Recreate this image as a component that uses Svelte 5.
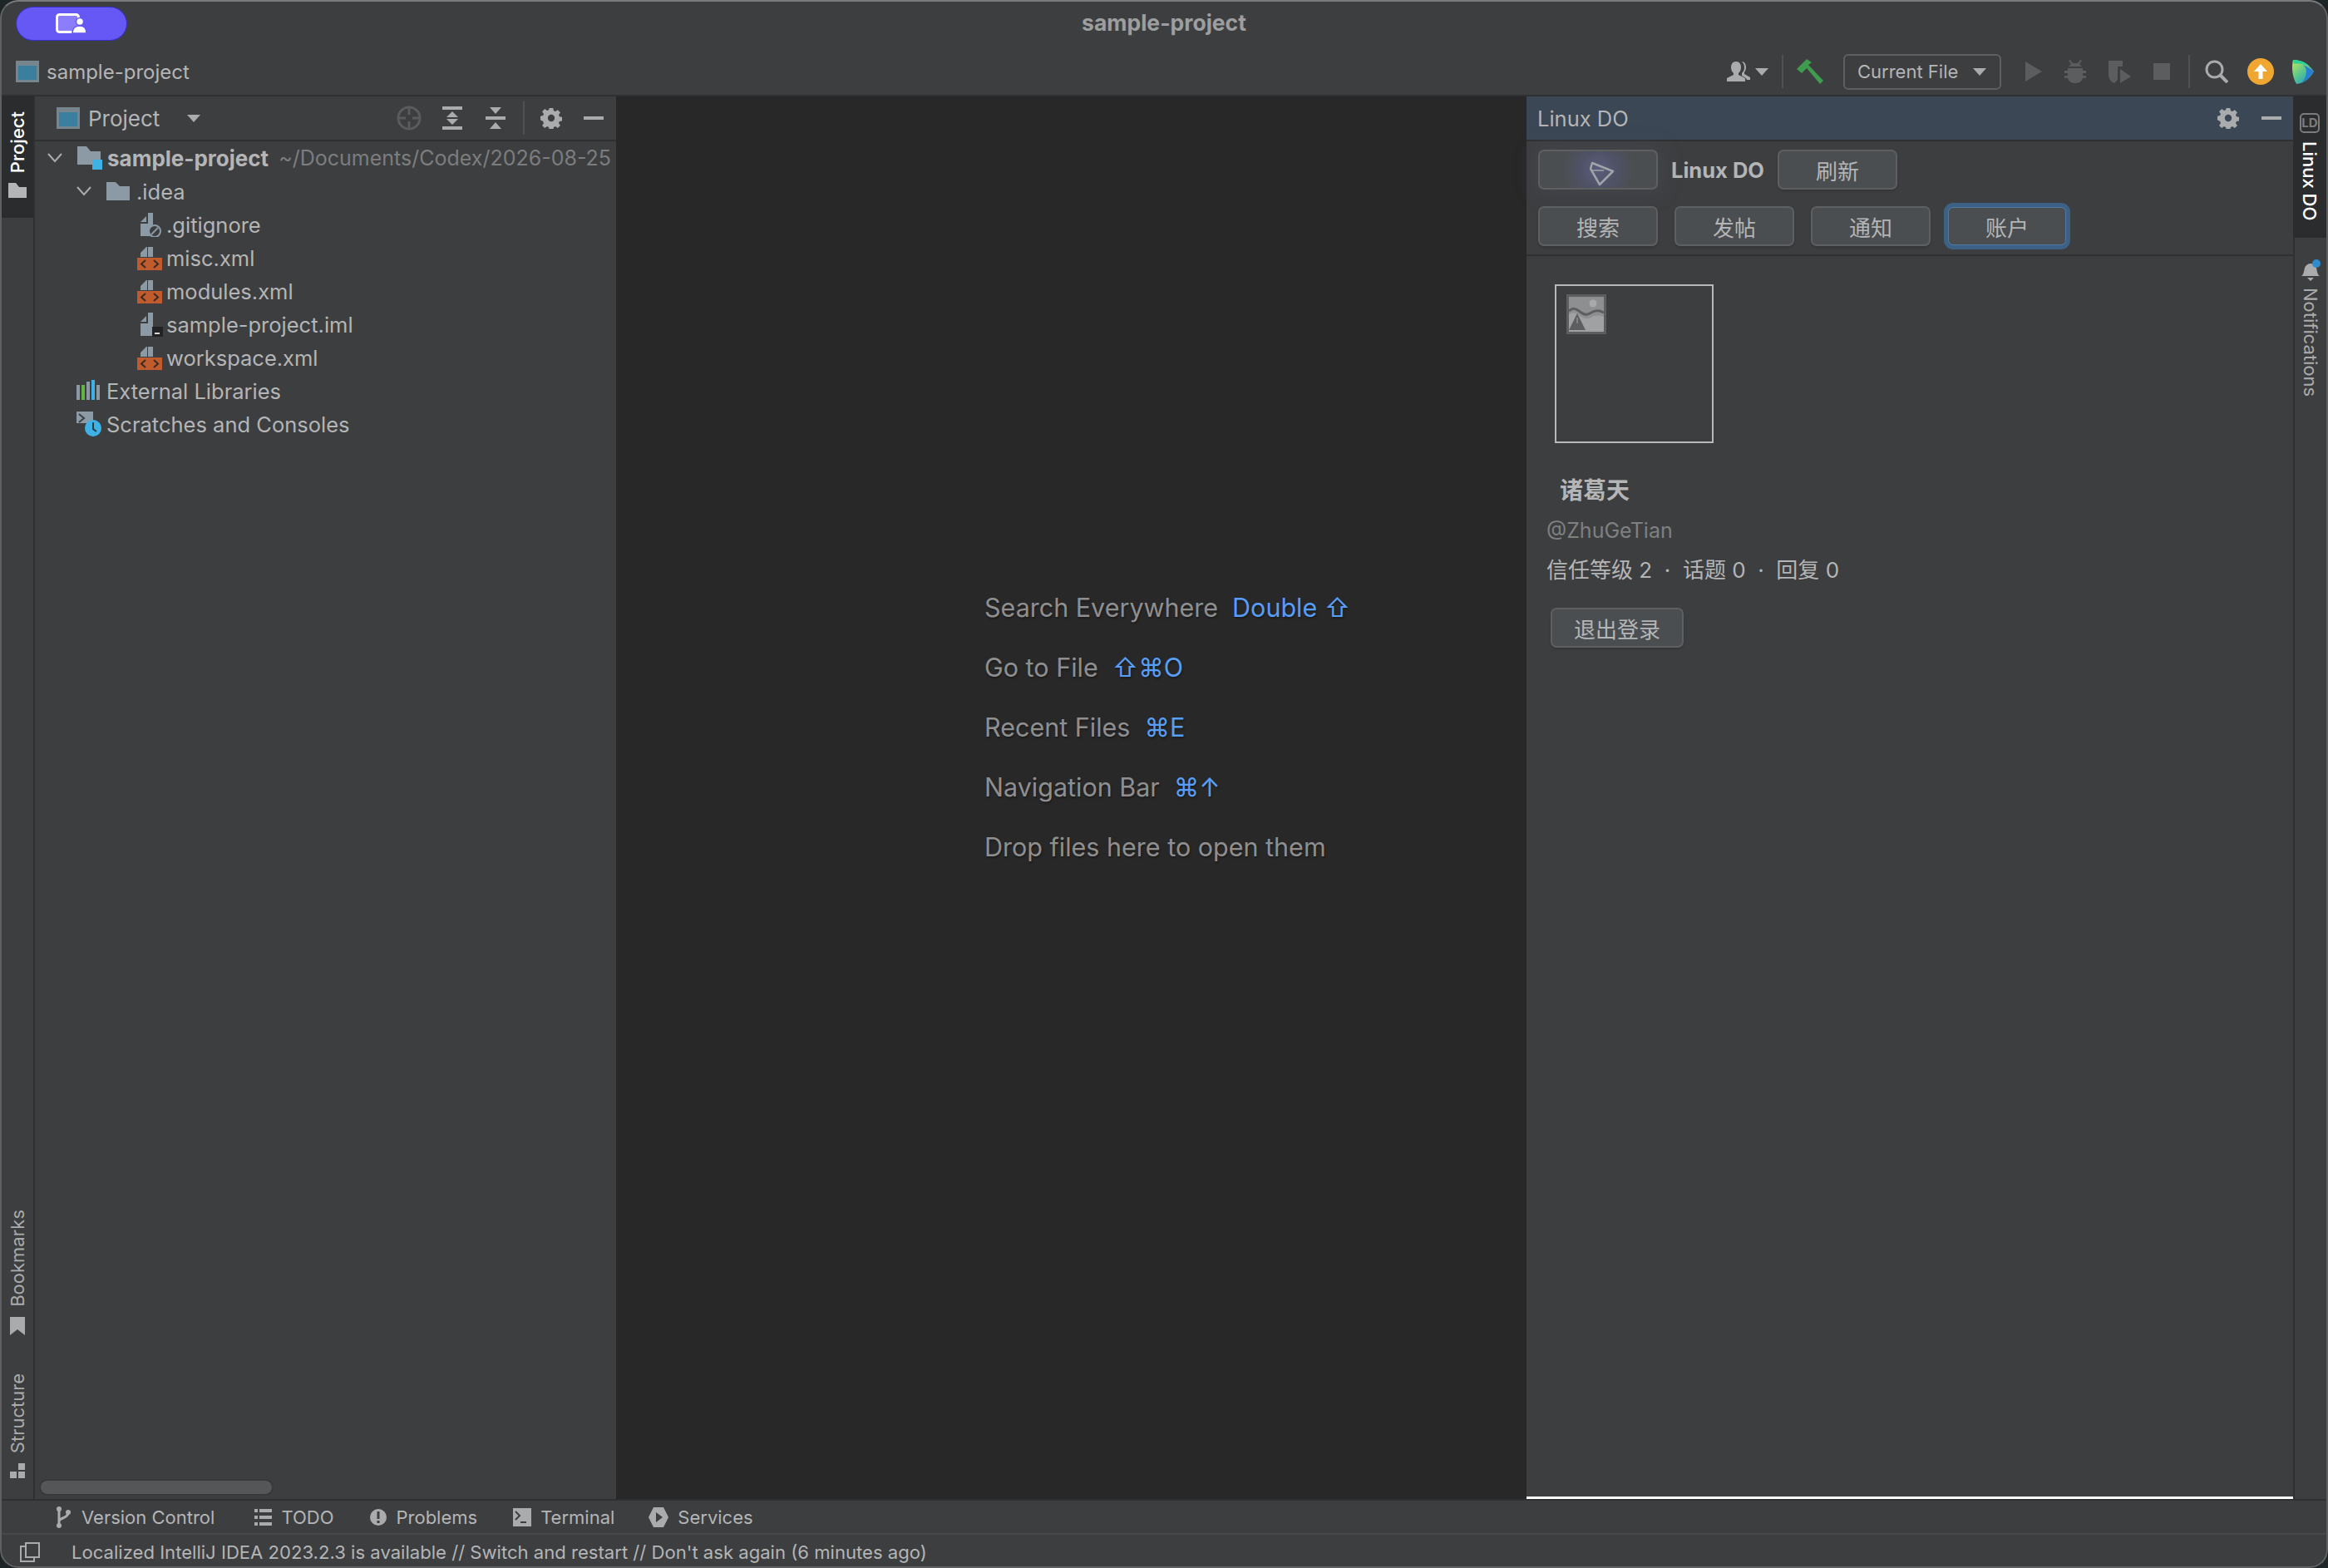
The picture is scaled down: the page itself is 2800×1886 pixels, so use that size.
<script>
	const tree = [
		{ name: ".gitignore", icon: "ignore" },
		{ name: "misc.xml", icon: "xml" },
		{ name: "modules.xml", icon: "xml" },
		{ name: "sample-project.iml", icon: "iml" },
		{ name: "workspace.xml", icon: "xml" }
	];

	const hints = [
		{ label: "Search Everywhere", key: "Double ⇧" },
		{ label: "Go to File", key: "⇧⌘O" },
		{ label: "Recent Files", key: "⌘E" },
		{ label: "Navigation Bar", key: "⌘↑" },
		{ label: "Drop files here to open them", key: "" }
	];

	const tabs = ["搜索", "发帖", "通知", "账户"];
</script>

{#snippet gear()}
	<svg class="gear" viewBox="-1 0 28 26" width="26" height="26">
		<path fill="#a9abac" fill-rule="evenodd" d="M10.5 0h5l.7 3.6 2.2.9 3-2.1 3.4 3.4-2.1 3 .9 2.2 3.4.7v5l-3.4.7-.9 2.2 2.1 3-3.4 3.4-3-2.1-2.2.9-.7 3.6h-5l-.7-3.6-2.2-.9-3 2.1-3.4-3.4 2.1-3-.9-2.2L-1 15.5v-5l3.4-.7.9-2.2-2.1-3 3.4-3.4 3 2.1 2.2-.9zM13 8.5a4.5 4.5 0 1 0 0 9 4.5 4.5 0 0 0 0-9z" />
	</svg>
{/snippet}

{#snippet projectIcon()}
	<svg viewBox="0 0 28 26" width="28" height="26">
		<rect width="28" height="26" fill="#77868e" />
		<rect x="3" y="6" width="22" height="17" fill="#3b7f9f" />
	</svg>
{/snippet}

{#snippet fileIcon(kind)}
	<svg viewBox="0 0 32 30" width="32" height="30">
		{#if kind === "xml"}
			<path fill="#8b9aa4" d="M5 14V9l7-7h1v12zM14 2h6v12h-6z" />
			<rect x="1" y="15" width="30" height="15" fill="#bf5b2c" />
			<path fill="none" stroke="#3a2b24" stroke-width="2" d="M11 18l-5 4.500 5 4.500M21 18l5 4.500-5 4.500" />
		{:else}
			<path fill="#8b9aa4" d="M5 12l7-7v7zM14 1h6v28H5V14h9z" />
			{#if kind === "ignore"}
				<circle cx="22" cy="23" r="7" fill="#3d3e40" stroke="#8b9aa4" stroke-width="2" />
				<path stroke="#8b9aa4" stroke-width="2" d="M18 27l8-8" />
			{:else}
				<rect x="19" y="18" width="13" height="12" fill="#232324" />
				<rect x="22" y="25" width="6" height="2" fill="#d8d8d8" />
			{/if}
		{/if}
	</svg>
{/snippet}

<div class="Window">
	<header class="Titlebar">
		<div class="Titlebar-side">
			<div class="Pill">
				<svg viewBox="0 0 38 24" width="38" height="24">
					<rect x="1.500" y="1.500" width="26" height="21" rx="3" fill="#8b7dfb" stroke="#fff" stroke-width="3" />
					<circle cx="29" cy="10" r="4.500" fill="#fff" stroke="#6558f5" stroke-width="1.500" />
					<path fill="#fff" stroke="#6558f5" stroke-width="1.500" d="M20 24c0-6 4-9 9-9s8 3 8 9z" />
				</svg>
			</div>
		</div>
		<div class="Titlebar-title">sample-project</div>
		<div class="Titlebar-side"></div>
	</header>

	<nav class="Navbar">
		<div class="Navbar-crumb">
			{@render projectIcon()}
			<span>sample-project</span>
		</div>
		<div class="Navbar-tools">
			<svg class="ml-person" viewBox="0 0 28 24" width="28" height="24">
				<path fill="#a9abac" d="M0 24v-4l8-4v-2c-2-2-3-4-3-7 0-4 2-7 6-7s6 3 6 7c0 3-1 5-3 7v2l8 4v4z" />
				<path fill="#a9abac" d="M18 0c3 0 5 3 5 7 0 3-1 4-2 6v2l7 4v3h-4c-1-3-5-4-6-5v-3c2-2 3-4 3-7 0-3-1-5-3-7z" />
			</svg>
			<i class="Arrow ml-arrow-small"></i>
			<b class="Sep ml-sep-a"></b>
			<svg class="ml-hammer" viewBox="0 0 32 30" width="32" height="30">
				<path fill="#3f9c4f" d="M0 12L12 0l6 4-4 3 18 19-4 4L12 11l-6 6z" />
			</svg>
			<div class="Runconfig">
				<span>Current File</span>
				<i class="Arrow"></i>
			</div>
			<svg class="ml-play" viewBox="0 0 20 24" width="20" height="24"><path fill="#5c5d5e" d="M0 0l20 12L0 24z" /></svg>
			<svg class="ml-bug" viewBox="0 0 26 28" width="26" height="28">
				<path fill="#5c5d5e" d="M7 0l3 4h6l3-4 2 1-3 4 3 3H5l3-3-3-4zM4 10h18v3h4v3h-4v3h4v3h-4c-1 4-5 6-9 6s-8-2-9-6H0v-3h4v-3H0v-3h4z" />
			</svg>
			<svg class="ml-coverage" viewBox="0 0 30 28" width="30" height="28">
				<path fill="#5c5d5e" d="M3 1h17v7h-6v16l-4 4c-5-2-7-6-7-11zM17 11l13 9-13 8z" />
			</svg>
			<svg class="ml-stop" viewBox="0 0 20 20" width="20" height="20"><rect width="20" height="20" fill="#5c5d5e" /></svg>
			<b class="Sep ml-sep-b"></b>
			<svg class="ml-search" viewBox="0 0 28 28" width="28" height="28">
				<circle cx="11.500" cy="11.500" r="9.500" fill="none" stroke="#a9abac" stroke-width="3" />
				<path stroke="#a9abac" stroke-width="4" d="M18 18l9 9" />
			</svg>
			<svg class="ml-update" viewBox="0 0 32 32" width="32" height="32">
				<circle cx="16" cy="16" r="16" fill="#f0a732" />
				<path fill="#fff" d="M16 7l8 9h-5.500v9h-5v-9H8z" />
			</svg>
			<svg class="ml-toolbox" viewBox="0 0 28 30" width="28" height="30">
				<defs>
					<linearGradient id="tb" x1="0" y1="0" x2="0.800" y2="1">
						<stop offset="0" stop-color="#c8e85a" />
						<stop offset="0.500" stop-color="#5fc88a" />
						<stop offset="1" stop-color="#1d97cf" />
					</linearGradient>
				</defs>
				<path fill="url(#tb)" d="M2 1c10 0 19 5 25 14-5 9-12 14-21 15C1 22 0 10 2 1z" />
				<path fill="#2a7ed0" d="M14 7c5 2 9 5 13 8-4 6-9 11-15 14 4-5 6-9 6-14 0-3-1-5-4-8z" />
				<path fill="#2bd29a" d="M2 1c7 0 14 2 19 7-6-2-12-3-18-2z" />
			</svg>
		</div>
	</nav>

	<main class="Main">
		<aside class="Stripe Stripe--left">
			<div class="Stripe-group">
				<div class="Stripe-tab Stripe-tab--active">
					<span class="Vertical Vertical--up Vertical--on">Project</span>
					<svg viewBox="0 0 22 18" width="22" height="18"><path fill="#b4b5b6" d="M0 0h9l4 5h9v13H0z" /></svg>
				</div>
			</div>
			<div class="Stripe-group">
				<div class="Stripe-tab">
					<span class="Vertical Vertical--up">Bookmarks</span>
					<svg viewBox="0 0 18 22" width="18" height="22"><path fill="#a9abac" d="M0 0h18v22l-9-7-9 7z" /></svg>
				</div>
				<div class="Stripe-tab Stripe-tab--structure">
					<span class="Vertical Vertical--up">Structure</span>
					<svg viewBox="0 0 18 18" width="18" height="18">
						<path fill="#a9abac" d="M10 0h8v8h-8zM0 10h8v8H0zM10 10h8v8h-8z" />
					</svg>
				</div>
			</div>
		</aside>

		<section class="Project">
			<div class="Project-head">
				{@render projectIcon()}
				<span class="Project-title">Project</span>
				<i class="Arrow Project-arrow"></i>
				<div class="Project-tools">
					<svg class="Project-locate" viewBox="0 0 30 30" width="30" height="30">
						<circle cx="15" cy="15" r="13" fill="none" stroke="#5a5b5c" stroke-width="3" />
						<path stroke="#5a5b5c" stroke-width="3" d="M15 2v9M15 19v9M2 15h9M19 15h9" />
					</svg>
					<svg viewBox="0 0 24 28" width="24" height="28">
						<path fill="#a9abac" d="M0 0h24v4H0zM0 24h24v4H0zM12 6l7 7H5zM5 15h14l-7 7z" />
					</svg>
					<svg viewBox="0 0 24 28" width="24" height="28">
						<path fill="#a9abac" d="M0 12h24v4H0zM5 1h14l-7 8zM12 19l7 8H5z" />
					</svg>
					<b class="Sep"></b>
					{@render gear()}
					<i class="Minus"></i>
				</div>
			</div>

			<div class="Tree">
				<div class="Tree-row Tree-row--root">
					<svg class="Tree-chevron" viewBox="0 0 18 12" width="18" height="12"><path fill="none" stroke="#a9abac" stroke-width="2" d="M1 1l8 9 8-9" /></svg>
					<svg class="Tree-icon" viewBox="0 0 30 28" width="30" height="28">
						<path fill="#8b9aa4" d="M0 0h11l5 6h12v16H0z" />
						<rect x="18" y="16" width="12" height="12" fill="#3eb2e4" />
					</svg>
					<span class="Tree-bold">sample-project</span>
					<span class="Tree-path">~/Documents/Codex/2026-08-25</span>
				</div>
				<div class="Tree-row Tree-row--dir">
					<svg class="Tree-chevron" viewBox="0 0 18 12" width="18" height="12"><path fill="none" stroke="#a9abac" stroke-width="2" d="M1 1l8 9 8-9" /></svg>
					<svg class="Tree-icon" viewBox="0 0 28 22" width="28" height="22"><path fill="#8b9aa4" d="M0 0h11l5 5h12v17H0z" /></svg>
					<span>.idea</span>
				</div>
				{#each tree as file}
					<div class="Tree-row Tree-row--file">
						{@render fileIcon(file.icon)}
						<span>{file.name}</span>
					</div>
				{/each}
				<div class="Tree-row Tree-row--top">
					<svg class="Tree-icon" viewBox="0 0 30 26" width="30" height="26">
						<path fill="#8b9aa4" d="M0 6h4v18H0zM12 2h4v22h-4zM24 6h4v18h-4z" />
						<path fill="#62b543" d="M6 6h4v18H6z" />
						<path fill="#3eb2e4" d="M18 0h4v24h-4z" />
					</svg>
					<span>External Libraries</span>
				</div>
				<div class="Tree-row Tree-row--top">
					<svg class="Tree-icon" viewBox="0 0 30 30" width="30" height="30">
						<path fill="#8b9aa4" d="M0 0h20v14H0z" />
						<path fill="none" stroke="#3d3e40" stroke-width="2" d="M3 3l6 5-6 5" />
						<circle cx="20" cy="20" r="10" fill="#3eb2e4" />
						<path fill="none" stroke="#2a3a44" stroke-width="2" d="M20 13v8l4 3" />
					</svg>
					<span>Scratches and Consoles</span>
				</div>
			</div>

			<div class="Scroll"><div class="Scroll-thumb"></div></div>
		</section>

		<section class="Editor">
			<div class="Hints">
				{#each hints as hint}
					<div class="Hint">
						<span>{hint.label}</span>
						{#if hint.key}<span class="Hint-key">{hint.key}</span>{/if}
					</div>
				{/each}
			</div>
		</section>

		<section class="Panel">
			<div class="Panel-head">
				<span>Linux DO</span>
				<div class="Panel-tools">
					{@render gear()}
					<i class="Minus"></i>
				</div>
			</div>
			<div class="Panel-actions">
				<div class="Panel-row">
					<button class="Btn Btn--glow">
						<svg class="Btn-plane" viewBox="0 0 30 30" width="30" height="30">
							<path fill="none" stroke="#a2a3a8" stroke-width="2.500" stroke-linejoin="round" d="M3 2l25 10-16 16L1 9z" />
							<path stroke="#a2a3a8" stroke-width="1.500" d="M2 11h15" />
						</svg>
					</button>
					<strong class="Panel-brand">Linux DO</strong>
					<button class="Btn">刷新</button>
				</div>
				<div class="Panel-row">
					{#each tabs as tab, i}
						<button class="Btn" class:Btn--focus={i === 3}>{tab}</button>
					{/each}
				</div>
			</div>
			<div class="Account">
				<div class="Avatar">
					<svg viewBox="0 0 48 48" width="48" height="48">
						<rect width="48" height="48" fill="#5d5e5f" />
						<rect x="3" y="3" width="42" height="42" fill="#8e8f90" />
						<circle cx="32" cy="11" r="4.500" fill="#a8a9aa" />
						<path fill="none" stroke="#5d5e5f" stroke-width="3" d="M3 20c5-4 8-3 12 0s8 6 13 3 10-5 17-1" />
						<path fill="#a0a1a2" d="M3 24c6-3 8-2 12 1s9 6 14 3 10-3 16-1v18H3z" />
						<path fill="#5d5e5f" d="M13 23l10 20H3z" />
						<path fill="none" stroke="#8e8f90" stroke-width="1.500" d="M13 28v7" />
					</svg>
				</div>
				<div class="Account-name">诸葛天</div>
				<div class="Account-handle">@ZhuGeTian</div>
				<div class="Account-stats">信任等级 2 &nbsp;·&nbsp; 话题 0 &nbsp;·&nbsp; 回复 0</div>
				<button class="Btn Btn--logout">退出登录</button>
			</div>
			<div class="Panel-rule"></div>
		</section>

		<aside class="Stripe Stripe--right">
			<div class="Stripe-tab Stripe-tab--active Stripe-tab--ld">
				<svg viewBox="0 0 24 24" width="24" height="24">
					<rect x="1" y="1" width="22" height="22" rx="4" fill="none" stroke="#7b7c7d" stroke-width="2" />
					<text x="12" y="17" text-anchor="middle" class="Ld-mark">LD</text>
				</svg>
				<span class="Vertical Vertical--on">Linux DO</span>
			</div>
			<div class="Stripe-tab Stripe-tab--bell">
				<svg viewBox="0 0 24 26" width="24" height="26">
					<path fill="#a9abac" d="M1 20c3-2 3-6 4-10 1-3 4-5 7-5s6 2 7 5c1 4 1 8 4 10z" />
					<path fill="#a9abac" d="M8 22h8l-4 4z" />
					<circle cx="19" cy="5" r="5" fill="#2e8bcd" />
				</svg>
				<span class="Vertical">Notifications</span>
			</div>
		</aside>
	</main>

	<div class="Toolbar">
		<div class="Toolbar-item">
			<svg viewBox="0 0 18 26" width="18" height="26">
				<circle cx="4" cy="3" r="3" fill="#a9abac" />
				<circle cx="15" cy="7" r="3" fill="#a9abac" />
				<circle cx="4" cy="23" r="3" fill="#a9abac" />
				<path fill="none" stroke="#a9abac" stroke-width="3" d="M4 3v20M4 18c0-5 11-3 11-11" />
			</svg>
			Version Control
		</div>
		<div class="Toolbar-item">
			<svg viewBox="0 0 21 20" width="21" height="20">
				<path fill="#a9abac" d="M0 0h4v4H0zM6 0h15v4H6zM0 8h4v4H0zM6 8h15v4H6zM0 16h4v4H0zM6 16h15v4H6z" />
			</svg>
			TODO
		</div>
		<div class="Toolbar-item">
			<svg viewBox="0 0 20 22" width="20" height="22">
				<circle cx="10" cy="11" r="10" fill="#a9abac" />
				<path fill="#3d3e40" d="M8.500 4h3v9h-3zM8.500 15h3v3h-3z" />
			</svg>
			Problems
		</div>
		<div class="Toolbar-item">
			<svg viewBox="0 0 22 22" width="22" height="22">
				<rect width="22" height="22" fill="#a9abac" />
				<path fill="none" stroke="#3d3e40" stroke-width="2" d="M3 4l5 5-5 5M9 17h7" />
			</svg>
			Terminal
		</div>
		<div class="Toolbar-item">
			<svg viewBox="0 0 24 24" width="24" height="24">
				<path fill="#a9abac" d="M6 0h12l6 12-6 12H6L0 12z" />
				<path fill="#3d3e40" d="M9 6l8 6-8 6z" />
			</svg>
			Services
		</div>
	</div>

	<footer class="Status">
		<svg viewBox="0 0 24 24" width="24" height="24">
			<path fill="none" stroke="#a9abac" stroke-width="2" d="M7 18V1h16v17zM7 5H1v18h16v-5" />
		</svg>
		<span>Localized IntelliJ IDEA 2023.2.3 is available // Switch and restart // Don't ask again (6 minutes ago)</span>
	</footer>
</div>

<style>
	:global(body) {
		margin: 0;
		background: #1d2526;
	}

	.Window {
		--bg: #3d3e40;
		--line: #2f3031;
		--text: #b4b5b6;
		display: flex;
		flex-direction: column;
		box-sizing: border-box;
		width: 2800px;
		height: 1886px;
		overflow: hidden;
		border: 2px solid #5f6061;
		border-top-color: #7a7b7c;
		border-radius: 22px;
		background: var(--bg);
		color: var(--text);
		font-family: Inter, "Noto Sans CJK SC", sans-serif;
		font-size: 24px;
	}

	svg {
		display: block;
		flex: none;
	}

	.Titlebar {
		display: grid;
		grid-template-columns: 1fr auto 1fr;
		align-items: center;
		flex: none;
		height: 52px;
	}

	.Titlebar-title {
		margin-top: -3px;
		font-size: 26.5px;
		font-weight: 700;
		color: #9d9e9f;
	}

	.Pill {
		display: flex;
		align-items: center;
		justify-content: center;
		width: 132px;
		height: 39px;
		margin-left: 18px;
		border-radius: 20px;
		background: #6558f5;
		box-shadow: 0 0 0 1px #3a2fd0;
	}

	.Navbar {
		display: flex;
		align-items: center;
		justify-content: space-between;
		flex: none;
		height: 56px;
		padding-top: 4px;
		border-bottom: 2px solid var(--line);
	}

	.Navbar-crumb {
		display: flex;
		align-items: center;
		gap: 9px;
		padding-left: 17px;
		font-size: 24px;
	}

	.Navbar-tools {
		display: flex;
		align-items: center;
		padding-right: 14px;
	}

	.ml-arrow-small {
		margin-left: 6px;
		border-left-width: 7px;
		border-right-width: 7px;
	}
	.ml-sep-a { margin-left: 16px; }
	.ml-hammer { margin-left: 16px; }
	.ml-play { margin-left: 29px; }
	.ml-bug { margin-left: 27px; }
	.ml-coverage { margin-left: 24px; }
	.ml-stop { margin-left: 27px; }
	.ml-sep-b { margin-left: 22px; }
	.ml-search { margin-left: 18px; }
	.ml-update { margin-left: 23px; }
	.ml-toolbox { margin-left: 21px; }

	.Sep {
		display: block;
		width: 2px;
		height: 40px;
		background: #505152;
	}

	.Arrow {
		display: block;
		width: 0;
		height: 0;
		border-left: 8px solid transparent;
		border-right: 8px solid transparent;
		border-top: 9px solid #a9abac;
	}

	.Runconfig {
		display: flex;
		align-items: center;
		justify-content: space-between;
		box-sizing: border-box;
		width: 190px;
		height: 43px;
		margin-left: 24px;
		padding: 0 16px 0 15px;
		border: 2px solid #5e6060;
		border-radius: 6px;
		font-size: 22px;
	}

	.Main {
		display: flex;
		flex: 1;
		min-height: 0;
	}

	.Stripe {
		display: flex;
		flex-direction: column;
		flex: none;
		box-sizing: border-box;
	}

	.Stripe--left {
		justify-content: space-between;
		width: 40px;
		border-right: 2px solid var(--line);
	}

	.Stripe--right {
		width: 40px;
		border-left: 2px solid var(--line);
	}

	.Stripe-tab {
		display: flex;
		flex-direction: column;
		align-items: center;
		gap: 12px;
	}

	.Stripe-tab--active {
		background: #2b2c2d;
		height: 146px;
		padding-top: 18px;
		box-sizing: border-box;
	}

	.Stripe-tab--structure {
		margin-top: 46px;
		padding-bottom: 25px;
	}

	.Stripe-tab--ld {
		height: 170px;
		padding-top: 20px;
		gap: 10px;
		margin-left: -2px;
	}

	.Stripe-tab--bell {
		margin-top: 26px;
		gap: 8px;
	}

	.Vertical {
		writing-mode: vertical-rl;
		font-size: 22px;
		line-height: 26px;
		color: #a9abac;
	}

	.Vertical--up {
		transform: rotate(180deg);
	}

	.Vertical--on {
		color: #fff;
		font-weight: 500;
	}

	.Ld-mark {
		font-size: 15px;
		font-weight: 700;
		fill: #7b7c7d;
	}

	.Project {
		display: flex;
		flex-direction: column;
		flex: none;
		width: 699px;
		min-width: 0;
		overflow: hidden;
	}

	.Project-head {
		display: flex;
		align-items: center;
		flex: none;
		box-sizing: border-box;
		height: 54px;
		padding-left: 26px;
		border-bottom: 2px solid var(--line);
	}

	.Project-title {
		margin-left: 10px;
		font-size: 26px;
	}

	.Project-arrow {
		margin-left: 33px;
	}

	.Project-tools {
		display: flex;
		align-items: center;
		margin-left: auto;
		padding-right: 15px;
		gap: 28px;
	}

	.Project-locate {
		margin-right: -3px;
	}

	.Project-tools .Sep {
		margin: 0 -9px 0 -7px;
	}

	.Project-tools .Minus {
		margin-left: -2px;
	}

	.Minus {
		display: block;
		width: 24px;
		height: 4px;
		background: #a9abac;
	}

	.Tree {
		flex: 1;
		font-size: 25.5px;
	}

	.Tree-row {
		display: flex;
		align-items: center;
		height: 40px;
		white-space: nowrap;
	}

	.Tree-row--root { padding-left: 15px; }
	.Tree-row--dir { padding-left: 50px; }
	.Tree-row--file { padding-left: 122px; gap: 4px; }
	.Tree-row--top { padding-left: 50px; gap: 6px; }

	.Tree-row--root .Tree-icon,
	.Tree-row--dir .Tree-icon {
		margin: 0 6px 0 18px;
	}

	.Tree-row--dir span { margin-left: 2px; }

	.Tree-bold {
		font-size: 26px;
		font-weight: 700;
	}

	.Tree-path {
		margin-left: 12px;
		font-size: 25px;
		color: #7c7d7e;
	}

	.Scroll {
		flex: none;
		height: 24px;
		padding-left: 5px;
	}

	.Scroll-thumb {
		box-sizing: border-box;
		width: 282px;
		height: 20px;
		border: 2px solid #383939;
		border-radius: 10px;
		background: #555657;
	}

	.Editor {
		display: flex;
		align-items: center;
		flex: 1;
		min-width: 0;
		background: #282828;
	}

	.Hints {
		display: flex;
		flex-direction: column;
		gap: 32px;
		margin-left: 443px;
		margin-top: -170px;
		font-size: 30.5px;
		line-height: 40px;
		color: #8f8f8f;
		text-shadow: 1px 2px 2px #1c1c1c;
	}

	.Hint {
		display: flex;
		gap: 17px;
	}

	.Hint-key {
		color: #589df6;
		font-family: Inter, "DejaVu Sans", sans-serif;
	}

	.Panel {
		position: relative;
		display: flex;
		flex-direction: column;
		flex: none;
		width: 922px;
	}

	.Panel-head {
		display: flex;
		align-items: center;
		justify-content: space-between;
		flex: none;
		box-sizing: border-box;
		height: 54px;
		padding: 0 14px 0 13px;
		background: #3b4754;
		border-bottom: 2px solid var(--line);
		font-size: 25.5px;
	}

	.Panel-tools {
		display: flex;
		align-items: center;
		gap: 27px;
	}

	.Panel-actions {
		display: flex;
		flex-direction: column;
		gap: 20px;
		flex: none;
		box-sizing: border-box;
		height: 138px;
		padding: 10px 14px 0;
		border-bottom: 2px solid var(--line);
	}

	.Panel-row {
		display: flex;
		align-items: center;
		gap: 20px;
	}

	.Panel-brand {
		margin: 0 -4px 0 -4px;
		font-size: 25.5px;
		font-weight: 700;
	}

	.Btn {
		position: relative;
		display: flex;
		align-items: center;
		justify-content: center;
		box-sizing: border-box;
		width: 144px;
		height: 48px;
		padding: 0;
		border: 2px solid #5d5f60;
		border-radius: 7px;
		background: #4b4e50;
		box-shadow: 0 2px 2px #353637;
		color: var(--text);
		font: inherit;
		font-size: 26px;
	}

	.Btn--glow {
		background: radial-gradient(circle at 50% 50%, #5a5d7a 0, #4f5266 30%, #4b4e50 60%);
		box-shadow: 0 0 26px 4px rgba(90, 95, 125, 0.25);
	}

	.Btn-plane {
		margin: 10px 0 0 10px;
	}

	.Btn--focus {
		outline: 5px solid #3d6185;
		outline-offset: -1px;
		border-color: #4d7aa3;
	}

	.Btn--logout {
		width: 160px;
		margin: 27px 0 0 5px;
	}

	.Account {
		display: flex;
		flex-direction: column;
		align-items: flex-start;
		flex: 1;
		padding: 34px 0 0 24px;
	}

	.Avatar {
		box-sizing: border-box;
		width: 191px;
		height: 191px;
		margin-left: 10px;
		padding: 10px 12px;
		border: 2px solid #b8b8b8;
	}

	.Account-name {
		margin: 39px 0 0 16px;
		font-size: 28px;
		font-weight: 700;
		line-height: 36px;
	}

	.Account-handle {
		margin-top: 12px;
		font-size: 25px;
		line-height: 36px;
		color: #7f8080;
	}

	.Account-stats {
		margin-top: 12px;
		font-size: 26px;
		line-height: 36px;
	}

	.Panel-rule {
		flex: none;
		height: 3px;
		background: #fff;
	}

	.Toolbar {
		display: flex;
		align-items: center;
		gap: 43px;
		flex: none;
		box-sizing: border-box;
		height: 43px;
		padding-left: 65px;
		border-top: 2px solid var(--line);
		border-bottom: 2px solid #47484a;
		font-size: 22px;
	}

	.Toolbar-item {
		display: flex;
		align-items: center;
		gap: 11px;
	}

	.Toolbar-item:first-child {
		gap: 13px;
		margin-right: 5px;
	}

	.Toolbar-item:nth-child(2) {
		margin-right: 1px;
	}

	.Toolbar-item:nth-child(4) {
		margin-right: -2px;
	}

	.Status {
		display: flex;
		align-items: center;
		gap: 38px;
		flex: none;
		height: 35px;
		padding: 3px 0 0 22px;
		font-size: 22.1px;
	}
</style>
